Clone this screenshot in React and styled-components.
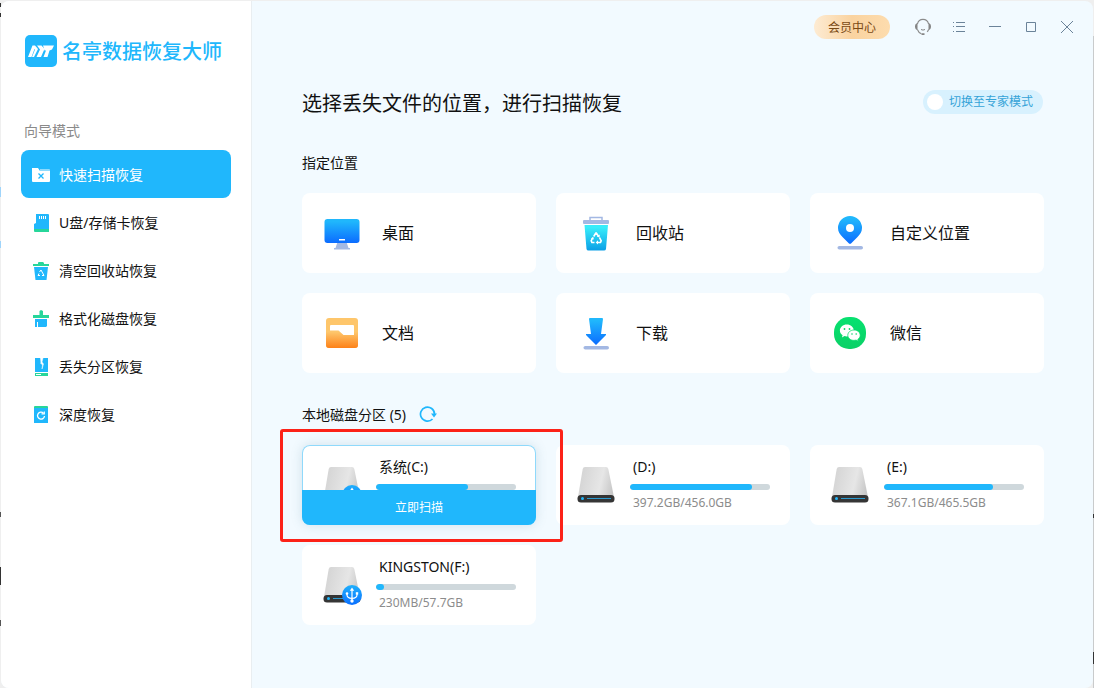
import React from "react";
import styled, { createGlobalStyle, css } from "styled-components";

const BLUE = "#20b7fc";

const GlobalStyle = createGlobalStyle`
  *, *::before, *::after { box-sizing: border-box; }
  body {
    margin: 0;
    color: #111;
    background: #efefef;
    font-family: "Noto Sans", "Noto Sans CJK SC", sans-serif;
    font-size: 14px;
    line-height: 20px;
  }
  button, input { font: inherit; color: inherit; margin: 0; }
  button { border: 0; padding: 0; background: none; cursor: pointer; }
  svg { display: block; flex: none; }
`;

/* ---------- window frame ---------- */

const Desktop = styled.div`
  min-height: 100vh;
  display: flex;
  padding: 1px 1px 0;
  background:
    linear-gradient(#333 0 0) 0 3px / 1px 4px no-repeat,
    linear-gradient(#333 0 0) 0 13px / 1px 4px no-repeat,
    linear-gradient(#9fd4fa 0 0) 0 241px / 1px 7px no-repeat,
    linear-gradient(#9fd4fa 0 0) 0 187px / 1px 10px no-repeat,
    linear-gradient(#333 0 0) 0 567px / 1px 18px no-repeat,
    linear-gradient(#555 0 0) 0 512px / 1px 5px no-repeat,
    linear-gradient(#555 0 0) 0 620px / 1px 6px no-repeat,
    linear-gradient(#333 0 0) 100% 514px / 1px 4px no-repeat,
    linear-gradient(#333 0 0) 100% 652px / 1px 12px no-repeat,
    linear-gradient(#c9cbcc 0 0) 100% 36px / 1px 100% no-repeat,
    #efefef;
`;

const Window = styled.div`
  flex: 1;
  display: flex;
  border-radius: 8px;
  overflow: hidden;
  background: #f2faff;
`;

/* ---------- sidebar ---------- */

const Sidebar = styled.aside`
  flex: none;
  width: 251px;
  padding: 34px 20px 0;
  background: #fff;
  border-right: 1px solid #e9eef1;
`;

const Brand = styled.div`
  display: flex;
  align-items: flex-start;
  gap: 5px;
  padding-left: 4px;
  color: ${BLUE};
  font-size: 20px;
  font-weight: 500;
  line-height: 34px;
  white-space: nowrap;
`;

const NavTitle = styled.h2`
  margin: 52px 0 9px;
  padding-left: 3px;
  font-size: 14px;
  font-weight: 400;
  line-height: 20px;
  color: #8a8a8a;
`;

const NavList = styled.nav`
  display: flex;
  flex-direction: column;
`;

const NavItem = styled.button`
  display: flex;
  align-items: center;
  gap: 8px;
  height: 48px;
  padding: 2px 10px 0;
  border-radius: 8px;
  text-align: left;
  ${(p) => p.$active && css`
    background: ${BLUE};
    color: #fff;
  `}
`;

/* ---------- main area ---------- */

const Main = styled.main`
  flex: 1;
  min-width: 0;
`;

const TitleBar = styled.header`
  display: flex;
  justify-content: flex-end;
  align-items: center;
  height: 52px;
  padding-right: 8px;
`;

const MemberButton = styled.button`
  width: 76px;
  height: 24px;
  padding-top: 2px;
  margin-right: 15px;
  border-radius: 12px;
  font-size: 12px;
  line-height: 20px;
  color: #7a4a14;
  background: linear-gradient(90deg, #fdebd3, #fad3a0 50%, #fddcae);
`;

const WindowButton = styled.button`
  display: flex;
  align-items: center;
  justify-content: center;
  width: 36px;
  height: 32px;
  color: #6b8399;
`;

const Content = styled.div`
  padding: 37px 49px 20px 50px;
`;

const HeadingRow = styled.div`
  display: flex;
  align-items: flex-start;
  justify-content: space-between;
  margin-bottom: 35px;
  padding-right: 1px;
`;

const Heading = styled.h1`
  margin: 0;
  font-size: 20px;
  font-weight: 400;
  line-height: 28px;
`;

const ModeSwitch = styled.label`
  display: flex;
  align-items: center;
  gap: 6px;
  height: 24px;
  padding: 0 10px 0 4px;
  border-radius: 12px;
  background: #d8f1fe;
  color: #35a3d8;
  font-size: 12px;
  line-height: 24px;
  cursor: pointer;
`;

const SwitchKnob = styled.input`
  appearance: none;
  width: 16px;
  height: 16px;
  border-radius: 50%;
  background: #fff;
`;

const SectionTitle = styled.h2`
  display: flex;
  align-items: center;
  gap: 13px;
  margin: 0 0 20px;
  font-size: 14px;
  font-weight: 400;
  line-height: 20px;
`;

const CardGrid = styled.section`
  display: grid;
  grid-template-columns: repeat(3, minmax(0, 1fr));
  gap: 20px;
  margin-bottom: 32px;
`;

const LocationCard = styled.button`
  display: flex;
  align-items: center;
  gap: 20px;
  height: 80px;
  padding: 0 20px;
  border-radius: 8px;
  background: #fff;
  font-size: 16px;
  line-height: 24px;
  text-align: left;
`;

const DiskCard = styled.article`
  position: relative;
  display: flex;
  align-items: flex-start;
  gap: 14px;
  height: 80px;
  padding: 12px 20px 0;
  border-radius: 8px;
  background: #fff;
  ${(p) => p.$active && css`
    box-shadow: inset 0 0 0 1px #8fd9fb, 0 0 12px rgba(60, 110, 140, 0.18);
  `}
`;

const DiskInfo = styled.div`
  flex: 1;
  min-width: 0;
`;

const DiskName = styled.h3`
  margin: 0 0 7px 3px;
  font-size: 14px;
  font-weight: 400;
  line-height: 20px;
`;

const Track = styled.div`
  height: 6px;
  border-radius: 3px;
  overflow: hidden;
  background: #cfd8dc;
`;

const Fill = styled.div`
  height: 100%;
  border-radius: 3px;
  background: ${BLUE};
`;

const DiskUsage = styled.p`
  margin: 5px 0 0 3px;
  font-size: 12px;
  line-height: 16px;
  color: #8c8c8c;
`;

const ScanButton = styled.button`
  position: absolute;
  left: 0;
  right: 0;
  bottom: 0;
  height: 35px;
  border-radius: 0 0 8px 8px;
  background: ${BLUE};
  color: #fff;
  font-size: 12px;
`;

const Highlight = styled.div`
  position: absolute;
  inset: -16px -27px -17px -22px;
  border: 3px solid #fc2218;
  border-radius: 3px;
  pointer-events: none;
  z-index: 1;
`;

const RefreshButton = styled.button`
  display: flex;
  color: ${BLUE};
`;

/* ---------- drawings ---------- */

const LogoMark = () => (
  <svg width="32" height="32" viewBox="0 0 32 32" aria-hidden="true">
    <rect width="32" height="32" rx="5" fill={BLUE} />
    <g fill="#fff">
      <path d="M3 22 7.500 10.500H10L13 14 9 22H7L10 14.500 9.500 14 6.500 22z" />
      <path d="M11.500 22 15 14.500 12 10.500H16.500L19.500 14 16 22z" />
      <path d="M18.500 22 21 15.500H19.500L18 10.500H29L27 14.500 24.500 15.500 22.500 22z" />
    </g>
  </svg>
);

const NavIcon = ({ children }) => (
  <svg width="20" height="20" viewBox="0 0 20 20" aria-hidden="true">{children}</svg>
);

const GREEN = "#27d69a";

const ScanFolderIcon = () => (
  <NavIcon>
    <path d="M9 4h9a1 1 0 0 1 1 1v3H9z" fill="#8edafd" />
    <path d="M1 3h6l2 3h10v10a1 1 0 0 1-1 1H2a1 1 0 0 1-1-1z" fill="#fff" />
    <path d="m7.500 8.500 5 5m0-5-5 5" stroke={BLUE} strokeWidth="1.300" />
  </NavIcon>
);
const SdCardIcon = () => (
  <NavIcon>
    <path d="M5 1h12a1 1 0 0 1 1 1v14H3v-5l2-1z" fill={BLUE} />
    <path d="M3 16h15v3H4a1 1 0 0 1-1-1z" fill={GREEN} />
    <path d="M8.500 3v3M10.500 3v3M12.500 3v3M14.500 3v3" stroke="#fff" />
  </NavIcon>
);
const BinIcon = () => (
  <NavIcon>
    <path d="M7 3V1.500L8 1h4l1 1v1h5v2H2V3z" fill={GREEN} />
    <path d="M3 6h14l-1.500 13h-11z" fill={BLUE} />
    <path d="m8.500 11 1.500-2 3 5.500h-2M9 14.500H7l1-2" fill="none" stroke="#fff" />
  </NavIcon>
);
const BrushIcon = () => (
  <NavIcon>
    <path d="M8.500 2 10 1l2 1v4h6v3H2V6h6.500z" fill={GREEN} />
    <path d="M4 10h12v7l-1 1H4z" fill={BLUE} />
    <path d="M6.500 13v5" stroke="#fff" />
  </NavIcon>
);
const PartitionIcon = () => (
  <NavIcon>
    <path d="M4 1h13v14H4z" fill={BLUE} />
    <path d="M4 16h13v3H4z" fill={GREEN} />
    <path d="m9.500 1 .5 5h-.5l2 2-.5 4 1.500-5-1.500-2 1-4z" fill="#fff" stroke="#fff" strokeWidth=".5" />
    <path d="M5 17.500h5" stroke="#fff" />
  </NavIcon>
);
const DeepIcon = () => (
  <NavIcon>
    <path d="M3 3h14v15H3z" fill={BLUE} />
    <path d="M3 2a1 1 0 0 1 1-1h12a1 1 0 0 1 1 1v1H3z" fill={GREEN} />
    <path d="M12.500 8.200A3.500 3.500 0 1 0 13.500 11" fill="none" stroke="#fff" strokeWidth="1.300" />
    <path d="M10.500 8.800h2.800V6.500" fill="none" stroke="#fff" strokeWidth="1.200" />
  </NavIcon>
);

const LargeIcon = ({ id, from, to, children }) => (
  <svg width="40" height="40" viewBox="0 0 40 40" aria-hidden="true">
    <defs>
      <linearGradient id={id} x1="0" y1="0" x2="0" y2="1">
        <stop offset=".1" stopColor={from} />
        <stop offset="1" stopColor={to} />
      </linearGradient>
    </defs>
    {children}
  </svg>
);

const DesktopIcon = () => (
  <LargeIcon id="desk" from="#20b7fc" to="#0b6cff">
    <path d="M15.500 29h9l2 6h1.500v1.500H12V35h1.500z" fill="#a3b8e3" />
    <rect x="2.500" y="6" width="35" height="24" rx="3" fill="url(#desk)" />
    <path d="M17 26.800h6" stroke="#fff" strokeWidth="1.500" />
  </LargeIcon>
);
const RecycleIcon = () => (
  <LargeIcon id="recycle" from="#38ecfa" to="#0b9fe6">
    <path d="M14 8V4.500h12V8" fill="none" stroke="#a3b8e3" strokeWidth="1.500" />
    <rect x="7" y="7" width="26" height="4" rx="1" fill="#a3b8e3" />
    <path d="M8.500 12h23.500l-2 24a2 2 0 0 1-2 1.500H12.500a2 2 0 0 1-2-1.500z" fill="url(#recycle)" />
    <g transform="translate(0 1)">
      <path d="m17.700 22.500 2.100-3.500h.6l2.200 3.500M16.800 23.500l-1.600 3.300.7 1.700h2.600M23.500 23.500l1.700 3.300-.7 1.700h-3.500" fill="none" stroke="#fff" strokeWidth="1.600" />
      <path d="m23.800 20.500-.2 3-2.800-1.100zM22 26.200v4.400l-2.300-2.200zM15 24.800l2.200-1.700.7 2.500z" fill="#fff" />
    </g>
  </LargeIcon>
);
const PinIcon = () => (
  <LargeIcon id="pin" from="#20b7fc" to="#0b6cff">
    <path d="M20 3a12 12 0 0 1 12 12c0 4-2 6.500-4.500 9l-6 6a2 2 0 0 1-3 0l-6-6C10 21.500 8 19 8 15A12 12 0 0 1 20 3z" fill="url(#pin)" />
    <circle cx="20" cy="15" r="4" fill="#fff" />
    <rect x="7.500" y="33" width="25.500" height="3.600" rx="1.800" fill="#a3b8e3" />
  </LargeIcon>
);
const DocumentIcon = () => (
  <LargeIcon id="docs" from="#fec76c" to="#fd8118">
    <rect x="4" y="5" width="32" height="30" rx="3" fill="#fec66b" />
    <path d="M4 17h32v15a3 3 0 0 1-3 3H7a3 3 0 0 1-3-3z" fill="url(#docs)" />
    <path d="M9 12h22q1 0 1 1v9H21.500l-5-4.500H8V13q0-1 1-1z" fill="#fff" />
  </LargeIcon>
);
const DownloadIcon = () => (
  <LargeIcon id="down" from="#20b7fc" to="#0b6cff">
    <path d="M13 6q0-1 1-1h12q1 0 1 1l-2 15h5v1L20 32 10 22v-1h5z" fill="url(#down)" />
    <rect x="7.500" y="33" width="25.500" height="3.600" rx="1.800" fill="#a3b8e3" />
  </LargeIcon>
);
const WechatIcon = () => (
  <LargeIcon id="wechat" from="#07e06f" to="#0bd066">
    <rect x="4" y="4" width="32" height="32" rx="15" fill="url(#wechat)" />
    <path d="M16.800 11.500c-3.900 0-6.900 2.700-6.900 6 0 2 1 3.600 2.700 4.700l-.7 2.300 2.600-1.400 2.300.3c3.800 0 7-2.600 7-5.900s-3.200-6-7-6z" fill="#fff" />
    <path d="M24 17c3.500 0 6.200 2.300 6.200 5.300 0 1.700-1 3.200-2.400 4.100l.5 1.900-2.200-1.200-2.100.3c-3.500 0-6.200-2.300-6.200-5.100 0-3 2.700-5.300 6.200-5.300z" fill="#fff" stroke="#08da6c" strokeWidth=".8" />
    <g fill="#0bd76b">
      <circle cx="14.500" cy="16" r=".9" /><circle cx="19.500" cy="16" r=".9" />
      <circle cx="22" cy="21" r=".8" /><circle cx="26.200" cy="21" r=".8" />
    </g>
  </LargeIcon>
);

const DriveIcon = ({ id, usb }) => (
  <svg width="40" height="54" viewBox="0 0 40 54" aria-hidden="true">
    <defs>
      <linearGradient id={`${id}-body`} x1="0" y1=".3" x2="1" y2=".5">
        <stop offset="0" stopColor="#d3d3d3" />
        <stop offset=".65" stopColor="#e6e6e6" />
        <stop offset="1" stopColor="#c9c9c9" />
      </linearGradient>
      <linearGradient id={`${id}-usb`} x1="0" y1="0" x2="0" y2="1">
        <stop offset="0" stopColor="#20b0fc" />
        <stop offset="1" stopColor="#0b70ff" />
      </linearGradient>
    </defs>
    <path d="M6.700 12Q7.200 10 9 10h21q1.800 0 2.300 2L38 40H2z" fill={`url(#${id}-body)`} />
    <rect x="1.500" y="38" width="37" height="7.500" rx="3.500" fill="#353535" />
    <circle cx="6.500" cy="41.600" r="1.500" fill={BLUE} />
    <path d="M11 41.500h24" stroke="#2b9ad0" />
    {usb && (
      <g transform="translate(20 28)">
        <circle cx="10" cy="10" r="10" fill={`url(#${id}-usb)`} />
        <g fill="none" stroke="#fff" strokeWidth="1.200">
          <path d="M10 5v11M5 8v2q0 3 5 3.500M15 8v2q0 3-5 3.500" />
        </g>
        <g fill="#fff">
          <path d="m10 2.500 2.200 3.200H7.800z" /><circle cx="5" cy="8.500" r="1.300" />
          <rect x="13.800" y="7.200" width="2.400" height="2.400" /><circle cx="10" cy="16" r="1.700" />
        </g>
      </g>
    )}
  </svg>
);

const ServiceIcon = () => (
  <svg width="18" height="18" viewBox="0 0 18 18" fill="none" aria-hidden="true">
    <path d="M3.400 6C4.200 2.900 6.300 1.400 9 1.400S13.800 2.900 14.600 6M3.400 11.500c.7 2 1.900 3.400 3.900 4.200M14.600 11.500q-.5 1.500-1.500 2.300" stroke="#8b8b8b" strokeWidth="1.100" />
    <path d="M3.500 5v7C2 12 1 10.500 1 8.500S2 5.300 3.500 5zM14.500 5v7c1.500 0 2.500-1.500 2.500-3.500S16 5.300 14.500 5z" fill="#858585" />
    <path d="M7 11.500q2 1.200 4 0" stroke="#858585" />
    <path d="M7.500 16.100h3" stroke="#858585" strokeWidth="1.600" />
  </svg>
);
const ListIcon = () => (
  <svg width="12" height="12" viewBox="0 0 12 12" stroke="currentColor" aria-hidden="true">
    <path d="M3 1.500h9M3 5.500h9M3 10.500h9M0 1.500h1M0 5.500h1M0 10.500h1" />
  </svg>
);
const MinimizeIcon = () => (
  <svg width="12" height="12" viewBox="0 0 12 12" stroke="currentColor" aria-hidden="true">
    <path d="M0 5.500h12" />
  </svg>
);
const MaximizeIcon = () => (
  <svg width="12" height="12" viewBox="0 0 12 12" fill="none" stroke="currentColor" aria-hidden="true">
    <path d="M1.500 1.500h9v9h-9z" />
  </svg>
);
const CloseIcon = () => (
  <svg width="12" height="12" viewBox="0 0 12 12" stroke="currentColor" aria-hidden="true">
    <path d="m0 0 12 12M12 0 0 12" />
  </svg>
);
const RefreshIcon = () => (
  <svg width="18" height="18" viewBox="0 0 18 18" aria-hidden="true">
    <path d="M13.500 13A7 7 0 1 1 15.500 8" fill="none" stroke="currentColor" strokeWidth="1.700" />
    <path d="M12 7.500h6L15 11.500z" fill="currentColor" />
  </svg>
);

/* ---------- data ---------- */

const navItems = [
  { label: "快速扫描恢复", Icon: ScanFolderIcon, active: true },
  { label: "U盘/存储卡恢复", Icon: SdCardIcon },
  { label: "清空回收站恢复", Icon: BinIcon },
  { label: "格式化磁盘恢复", Icon: BrushIcon },
  { label: "丢失分区恢复", Icon: PartitionIcon },
  { label: "深度恢复", Icon: DeepIcon },
];

const locations = [
  { label: "桌面", Icon: DesktopIcon },
  { label: "回收站", Icon: RecycleIcon },
  { label: "自定义位置", Icon: PinIcon },
  { label: "文档", Icon: DocumentIcon },
  { label: "下载", Icon: DownloadIcon },
  { label: "微信", Icon: WechatIcon },
];

const disks = [
  { id: "c", name: "系统(C:)", percent: 66, usb: true, active: true },
  { id: "d", name: "(D:)", percent: 87, usage: "397.2GB/456.0GB" },
  { id: "e", name: "(E:)", percent: 78, usage: "367.1GB/465.5GB" },
  { id: "f", name: "KINGSTON(F:)", percent: 6, usage: "230MB/57.7GB", usb: true },
];

const windowButtons = [
  { label: "客服", Icon: ServiceIcon },
  { label: "菜单", Icon: ListIcon },
  { label: "最小化", Icon: MinimizeIcon },
  { label: "最大化", Icon: MaximizeIcon },
  { label: "关闭", Icon: CloseIcon },
];

export default function App() {
  return (
    <Desktop>
      <GlobalStyle />
      <Window>
        <Sidebar>
          <Brand><LogoMark />名亭数据恢复大师</Brand>
          <NavTitle>向导模式</NavTitle>
          <NavList>
            {navItems.map(({ label, Icon, active }) => (
              <NavItem key={label} type="button" $active={active}>
                <Icon />{label}
              </NavItem>
            ))}
          </NavList>
        </Sidebar>
        <Main>
          <TitleBar>
            <MemberButton type="button">会员中心</MemberButton>
            {windowButtons.map(({ label, Icon }) => (
              <WindowButton key={label} type="button" aria-label={label}><Icon /></WindowButton>
            ))}
          </TitleBar>
          <Content>
            <HeadingRow>
              <Heading>选择丢失文件的位置，进行扫描恢复</Heading>
              <ModeSwitch htmlFor="expert-mode">
                <SwitchKnob id="expert-mode" type="checkbox" />切换至专家模式
              </ModeSwitch>
            </HeadingRow>
            <SectionTitle>指定位置</SectionTitle>
            <CardGrid>
              {locations.map(({ label, Icon }) => (
                <LocationCard key={label} type="button"><Icon />{label}</LocationCard>
              ))}
            </CardGrid>
            <SectionTitle>
              本地磁盘分区 (5)
              <RefreshButton type="button" aria-label="刷新"><RefreshIcon /></RefreshButton>
            </SectionTitle>
            <CardGrid>
              {disks.map((disk) => (
                <DiskCard key={disk.id} $active={disk.active}>
                  <DriveIcon id={disk.id} usb={disk.usb} />
                  <DiskInfo>
                    <DiskName>{disk.name}</DiskName>
                    <Track role="progressbar" aria-label={disk.name} aria-valuenow={disk.percent}>
                      <Fill style={{ width: `${disk.percent}%` }} />
                    </Track>
                    {disk.usage && <DiskUsage>{disk.usage}</DiskUsage>}
                  </DiskInfo>
                  {disk.active && <ScanButton type="button">立即扫描</ScanButton>}
                  {disk.active && <Highlight />}
                </DiskCard>
              ))}
            </CardGrid>
          </Content>
        </Main>
      </Window>
    </Desktop>
  );
}
